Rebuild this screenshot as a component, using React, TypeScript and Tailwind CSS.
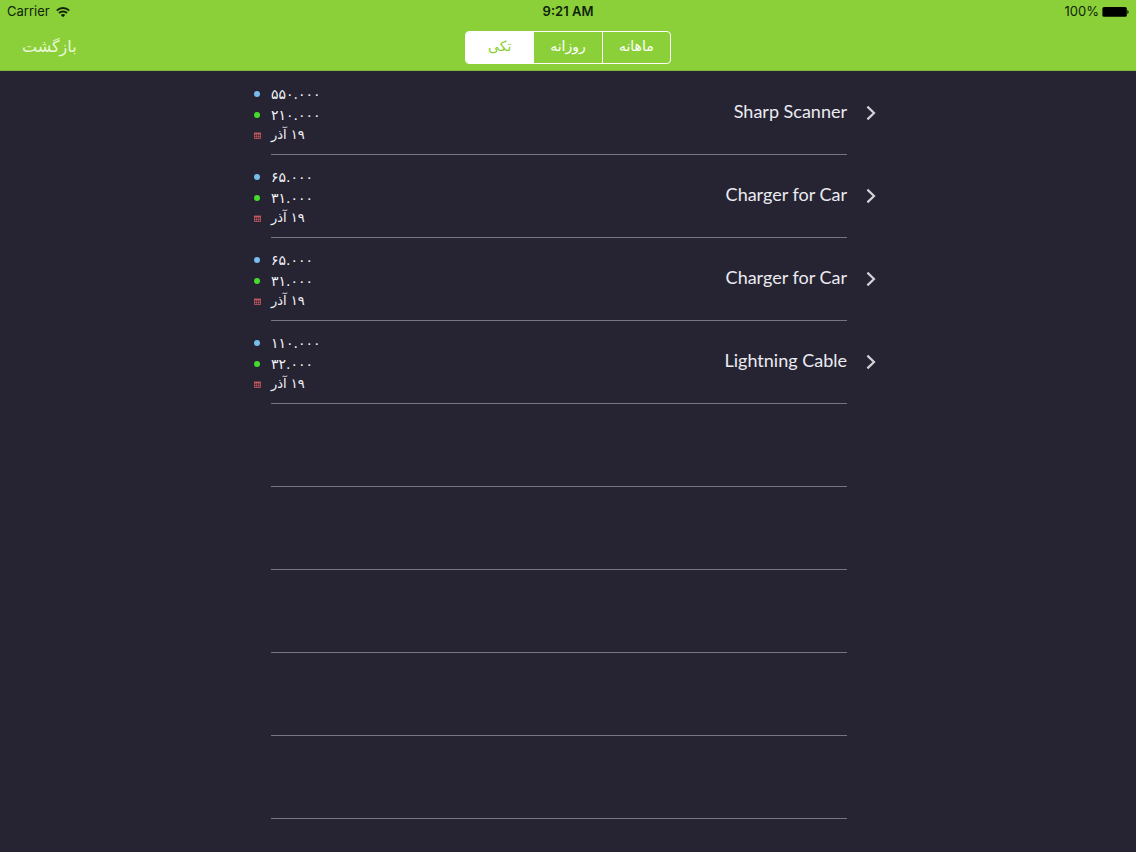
import React, { useState } from 'react';

type Sale = {
  title: string;
  price: string;
  profit: string;
  date: string;
};

const sales: Sale[] = [
  { title: 'Sharp Scanner', price: '۵۵۰.۰۰۰', profit: '۲۱۰.۰۰۰', date: '۱۹ آذر' },
  { title: 'Charger for Car', price: '۶۵.۰۰۰', profit: '۳۱.۰۰۰', date: '۱۹ آذر' },
  { title: 'Charger for Car', price: '۶۵.۰۰۰', profit: '۳۱.۰۰۰', date: '۱۹ آذر' },
  { title: 'Lightning Cable', price: '۱۱۰.۰۰۰', profit: '۳۲.۰۰۰', date: '۱۹ آذر' },
];

const tabs = ['تکی', 'روزانه', 'ماهانه'];

// empty separators drawn below the last sale
const emptyRows = [0, 1, 2, 3, 4];

function WifiIcon() {
  return (
    <svg className="w-[14px] h-[11px]" viewBox="0 0 14 11" fill="none" stroke="currentColor" strokeWidth="1.9">
      <path d="M0.8 3.6C4.2 0.2 9.8 0.2 13.2 3.6" />
      <path d="M3 6C5.2 3.9 8.8 3.9 11 6" />
      <path d="M7 10.2L4.8 8C6 6.8 8 6.8 9.2 8Z" fill="currentColor" stroke="none" />
    </svg>
  );
}

function BatteryIcon() {
  return (
    <svg className="w-[27px] h-[11px] text-black" viewBox="0 0 27 11" fill="currentColor">
      <rect x="0.4" y="0" width="24.4" height="9.8" rx="1.6" />
      <path d="M25.4 3C27 3.6 27 6.4 25.4 7Z" />
    </svg>
  );
}

function CalendarIcon() {
  return (
    <svg className="w-[7px] h-[7px] text-[#c4585c]" viewBox="0 0 7 7" fill="none" stroke="currentColor">
      <path d="M0.4 1.2H6.6V6.6H0.4Z" strokeWidth="0.9" />
      <path d="M0 1.6H7" strokeWidth="1.6" />
      <path d="M0.4 4.4H6.6M2.4 2V6.6M4.6 2V6.6" strokeWidth="0.7" />
    </svg>
  );
}

function ChevronIcon() {
  return (
    <svg className="w-[10px] h-[16px] text-[#d3d2d8]" viewBox="0 0 10 16" fill="none" stroke="currentColor" strokeWidth="2.2">
      <path d="M1.4 1.6L8 8L1.4 14.4" />
    </svg>
  );
}

function Detail({ icon, children }: { icon: React.ReactNode; children: React.ReactNode }) {
  return (
    <div className="flex h-[21px] items-center">
      <span className="flex w-[17px] items-center">{icon}</span>
      {children}
    </div>
  );
}

function SaleRow({ sale }: { sale: Sale }) {
  return (
    <li className="relative h-[83px] pl-[22px] pr-[28px]">
      <button className="flex h-full w-full items-center justify-between text-left">
        <div className="pt-0.5 font-['DejaVu_Sans',sans-serif] text-sm leading-5 text-[#f4f3f8]">
          <Detail icon={<span className="h-[6px] w-[6px] rounded-full bg-[#78bdf0]" />}>
            <span>{sale.price}</span>
          </Detail>
          <Detail icon={<span className="h-[6px] w-[6px] rounded-full bg-[#47dc2c]" />}>
            <span>{sale.profit}</span>
          </Detail>
          <Detail icon={<CalendarIcon />}>
            <span dir="rtl" className="pb-0.5 text-[13px]">{sale.date}</span>
          </Detail>
        </div>
        <div className="flex items-center gap-[19px] pb-0.5">
          <span className="pb-1 font-['Lato',sans-serif] text-lg leading-6 text-[#ecebf1]">{sale.title}</span>
          <ChevronIcon />
        </div>
      </button>
      <div className="absolute bottom-0 left-[39px] right-[57px] h-px bg-[#77757f]" />
    </li>
  );
}

export default function App() {
  const [active, setActive] = useState(0);

  return (
    <div className="flex h-screen flex-col overflow-hidden bg-[#262433]">
      <header className="border-b border-[#7fb83f] bg-[#8bd038]">
        <div className="grid h-6 grid-cols-3 items-center px-[7px] font-['Inter',sans-serif] text-[13px] text-[#10240a]">
          <div className="flex items-center gap-[6px]">
            <span>Carrier</span>
            <WifiIcon />
          </div>
          <span className="text-center font-semibold">9:21 AM</span>
          <div className="flex items-center justify-end gap-[3px]">
            <span>100%</span>
            <BatteryIcon />
          </div>
        </div>
        <nav className="grid h-[46px] grid-cols-3 items-center px-[22px] font-['DejaVu_Sans',sans-serif]">
          <button className="justify-self-start text-base text-[#eaf7d8]">بازگشت</button>
          <div className="flex h-[33px] w-[206px] justify-self-center overflow-hidden rounded-[4px] border border-white">
            {tabs.map((tab, i) => (
              <button
                key={tab}
                aria-pressed={i === active}
                onClick={() => setActive(i)}
                className={`flex-1 border-white pb-0.5 text-sm ${i > 0 ? 'border-l' : ''} ${
                  i === active ? 'bg-white text-[#8bd038]' : 'text-white'
                }`}
              >
                {tab}
              </button>
            ))}
          </div>
        </nav>
      </header>

      <main className="flex-1 overflow-hidden pt-px">
        <ul className="mx-auto max-w-2xl">
          {sales.map((sale, i) => (
            <SaleRow key={i} sale={sale} />
          ))}
          {emptyRows.map((n) => (
            <li key={n} className="flex h-[83px] items-end pl-[39px] pr-[57px]">
              <div className="h-px w-full bg-[#77757f]" />
            </li>
          ))}
        </ul>
      </main>
    </div>
  );
}
